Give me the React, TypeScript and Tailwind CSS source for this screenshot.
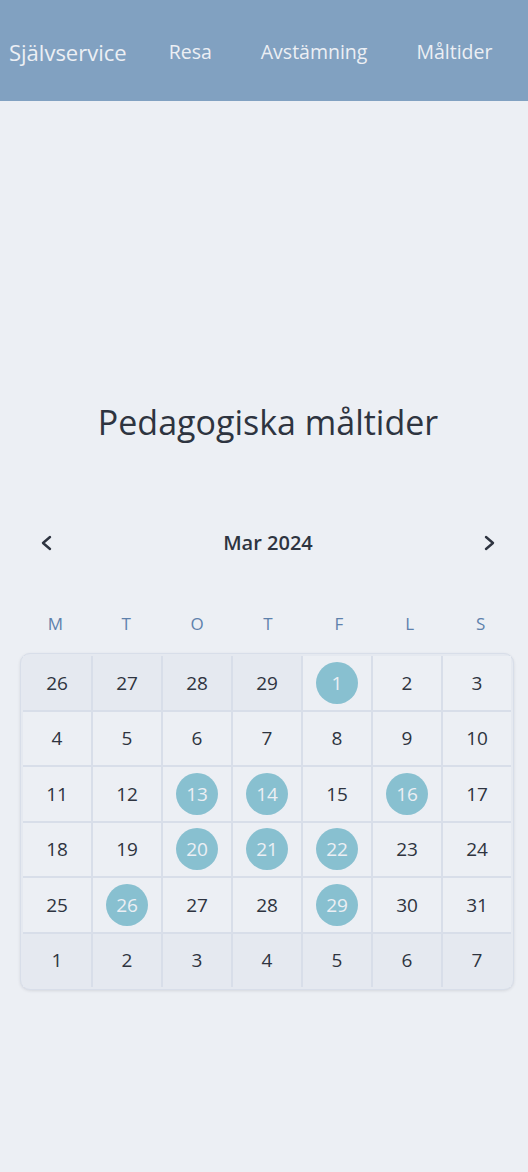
import React from "react";

const font = { fontFamily: '"Open Sans", "Noto Sans", sans-serif' };

type Cell = { n: number; other?: boolean; hl?: boolean };

const weeks: Cell[][] = [
  [{ n: 26, other: true }, { n: 27, other: true }, { n: 28, other: true }, { n: 29, other: true }, { n: 1, hl: true }, { n: 2 }, { n: 3 }],
  [{ n: 4 }, { n: 5 }, { n: 6 }, { n: 7 }, { n: 8 }, { n: 9 }, { n: 10 }],
  [{ n: 11 }, { n: 12 }, { n: 13, hl: true }, { n: 14, hl: true }, { n: 15 }, { n: 16, hl: true }, { n: 17 }],
  [{ n: 18 }, { n: 19 }, { n: 20, hl: true }, { n: 21, hl: true }, { n: 22, hl: true }, { n: 23 }, { n: 24 }],
  [{ n: 25 }, { n: 26, hl: true }, { n: 27 }, { n: 28 }, { n: 29, hl: true }, { n: 30 }, { n: 31 }],
  [{ n: 1, other: true }, { n: 2, other: true }, { n: 3, other: true }, { n: 4, other: true }, { n: 5, other: true }, { n: 6, other: true }, { n: 7, other: true }],
];

const days = ["M", "T", "O", "T", "F", "L", "S"];

export default function App() {
  return (
    <div className="min-h-[1172px] w-[528px] bg-[#eceff4] text-[#2e3440]" style={font}>
      <header className="flex h-[101px] items-center bg-[#81a1c1] pt-[3px] text-[#eceff4]">
        <span className="ml-[9px] text-[22px]">Självservice</span>
        <span className="ml-[42px] text-[19.5px]">Resa</span>
        <span className="ml-[49px] text-[19.5px]">Avstämning</span>
        <span className="ml-[49px] text-[19.5px]">Måltider</span>
      </header>

      <main className="pl-[20px] pr-[12px]">
        <h1 className="mt-[301px] text-center text-[34px] leading-[40px]">Pedagogiska måltider</h1>

        <div className="mt-[81px] flex h-[40px] items-center justify-between px-[20px]">
          <svg width="12" height="16" viewBox="0 0 12 16" className="text-[#2e3440]">
            <path d="M10 2 L3 8 L10 14" fill="none" stroke="currentColor" strokeWidth="2.4" strokeLinecap="round" strokeLinejoin="round" />
          </svg>
          <span className="text-[20px] font-semibold">Mar 2024</span>
          <svg width="12" height="16" viewBox="0 0 12 16" className="text-[#2e3440]">
            <path d="M2 2 L9 8 L2 14" fill="none" stroke="currentColor" strokeWidth="2.4" strokeLinecap="round" strokeLinejoin="round" />
          </svg>
        </div>

        <div className="mt-[48px] grid h-[24px] grid-cols-7 items-center text-center text-[17px] text-[#5e81ac]">
          {days.map((d, i) => (
            <span key={i}>{d}</span>
          ))}
        </div>

        <div className="mt-[18px] w-[494px] rounded-[10px] border border-[#d8dee9] bg-[#e5e9f0] p-[2px] shadow-[0_1px_3px_rgba(46,52,64,0.12)]">
          <div className="grid grid-cols-[repeat(7,68px)] gap-[2px] bg-[#d8dee9]">
            {weeks.flat().map((c, i) => (
              <div
                key={i}
                className={`flex h-[53.5px] items-center justify-center ${c.other ? "bg-[#e5e9f0]" : "bg-[#eceff4]"}`}
              >
                {c.hl ? (
                  <span className="flex h-[42px] w-[42px] items-center justify-center rounded-full bg-[#88c0d0] text-[19px] text-[#eceff4]">
                    {c.n}
                  </span>
                ) : (
                  <span className="text-[19px]">{c.n}</span>
                )}
              </div>
            ))}
          </div>
        </div>
      </main>
    </div>
  );
}
